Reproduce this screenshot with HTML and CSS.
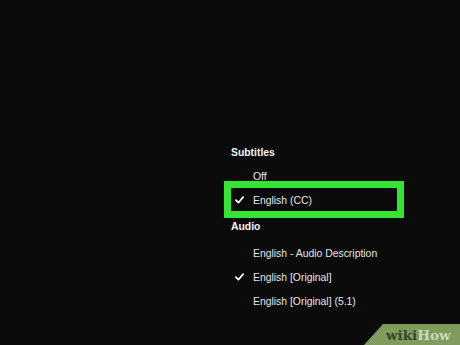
FILE: index.html
```html
<!DOCTYPE html>
<html>
<head>
<meta charset="utf-8">
<link rel="stylesheet" href="styles.css">
</head>
<body>
<div class="menu">
  <div class="row head">Subtitles</div>
  <div class="row item"><span class="chk"></span><span>Off</span></div>
  <div class="row item selected"><span class="chk"><svg viewBox="0 0 10 8" width="9" height="8"><path d="M1 4.2 L3.8 7 L9 0.8" fill="none" stroke="#fff" stroke-width="1.9" stroke-linecap="round" stroke-linejoin="round"/></svg></span><span>English (CC)</span></div>
  <div class="row head audio">Audio</div>
  <div class="row item ad"><span class="chk"></span><span>English - Audio Description</span></div>
  <div class="row item"><span class="chk"><svg viewBox="0 0 10 8" width="9" height="8"><path d="M1 4.2 L3.8 7 L9 0.8" fill="none" stroke="#fff" stroke-width="1.9" stroke-linecap="round" stroke-linejoin="round"/></svg></span><span>English [Original]</span></div>
  <div class="row item"><span class="chk"></span><span>English [Original] (5.1)</span></div>
</div>
<div class="badge"><span class="wiki">wiki</span><span class="how">How</span></div>
</body>
</html>
```
FILE: styles.css
```css
html, body {
  margin: 0;
  padding: 0;
  width: 460px;
  height: 345px;
  background: #0b0b0b;
  overflow: hidden;
}
body {
  position: relative;
  font-family: "Liberation Sans", Arial, sans-serif;
}
.menu {
  display: flex;
  flex-direction: column;
  padding: 140px 0 0 224px;
}
.row {
  height: 24px;
  display: flex;
  align-items: center;
  font-size: 10.4px;
  color: #e6e6e6;
}
.head {
  padding-left: 7px;
  font-weight: bold;
  color: #f4f4f4;
}
.audio { margin-top: 2px; }
.ad { margin-top: 3px; }
.item { padding-left: 11px; }
.chk {
  width: 18px;
  display: flex;
  align-items: center;
}
.selected { position: relative; }
.selected::after {
  content: "";
  position: absolute;
  top: -7px;
  bottom: -6px;
  left: 0;
  width: 180px;
  box-sizing: border-box;
  border: 7px solid #35e533;
}
.badge {
  position: absolute;
  right: 0;
  bottom: 0;
  width: 96px;
  height: 21px;
  background: #7f9b5e;
  clip-path: polygon(19px 0, 100% 0, 100% 100%, 0 100%);
  display: flex;
  align-items: center;
  padding-left: 22px;
  box-sizing: border-box;
  font-family: "DejaVu Serif", serif;
  font-weight: bold;
  font-size: 13.5px;
}
.wiki { color: #2e4a27; }
.how { color: #c9d8b6; }
```
